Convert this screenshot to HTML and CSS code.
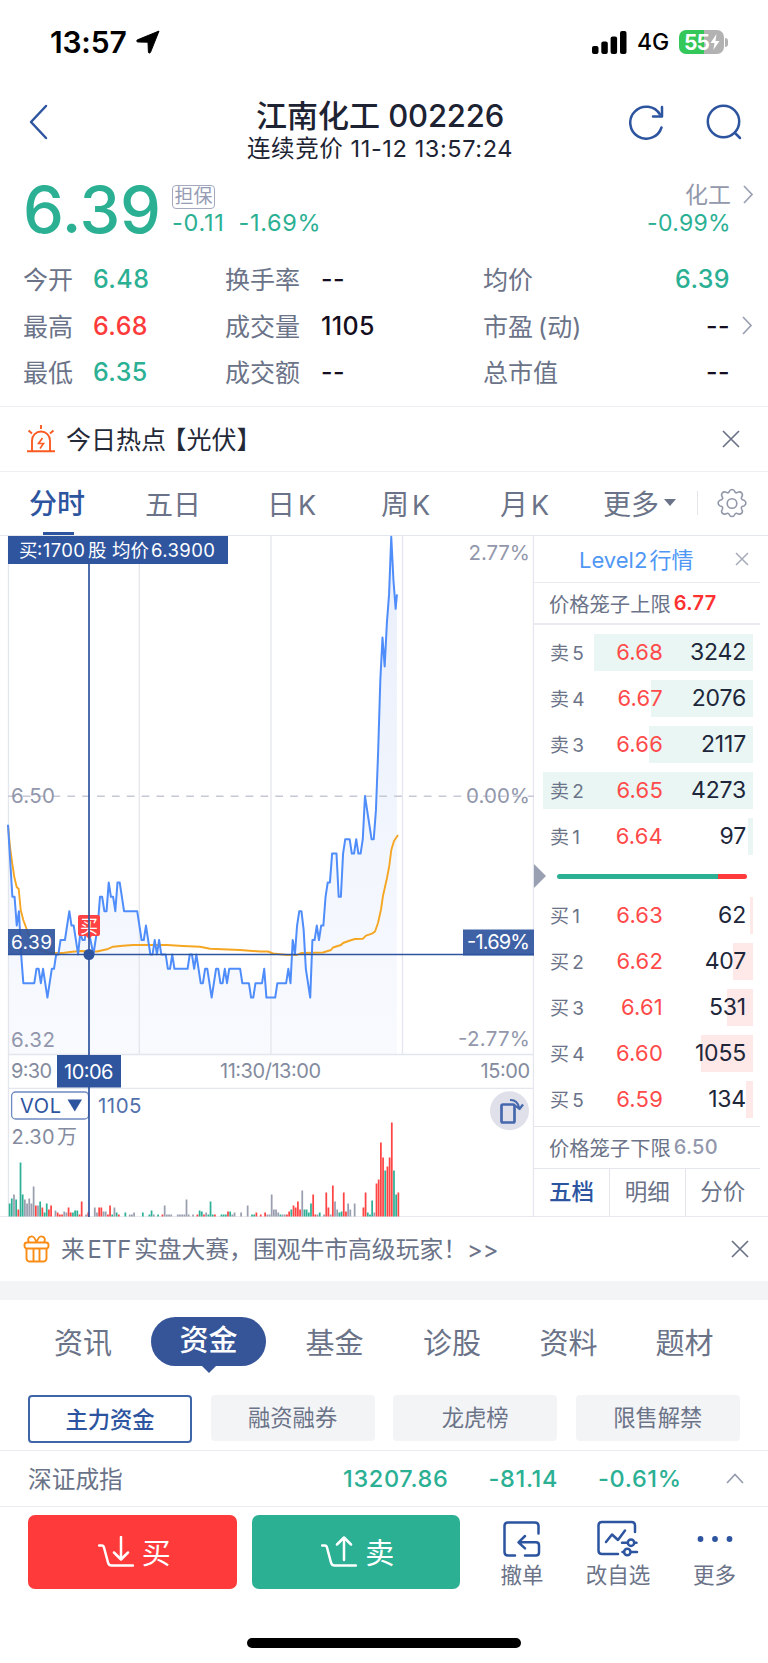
FILE: index.html
```html
<!DOCTYPE html>
<html lang="zh-CN">
<head>
<meta charset="utf-8">
<title>江南化工 002226</title>
<link rel="stylesheet" href="styles.css">
</head>
<body>
<div class="status">
  <div class="status-left"><span class="clock">13:57</span>
    <svg width="24" height="24" viewBox="0 0 24 24"><path d="M23 1 14.500 22.300c-.5 1.200-2 1-2.100-.4L12 12.200 2 12c-1.500 0-1.700-1.700-.4-2.200z" fill="#000" stroke="#000" stroke-linejoin="round"/></svg>
  </div>
  <div class="status-right">
    <svg width="35" height="23" viewBox="0 0 35 23"><rect x="0" y="15" width="6.500" height="8" rx="2"/><rect x="9.300" y="10.500" width="6.500" height="12.500" rx="2"/><rect x="18.600" y="5.500" width="6.500" height="17.500" rx="2"/><rect x="28" y="0" width="6.500" height="23" rx="2"/></svg>
    <span class="net">4G</span>
    <div class="battery"><span>55</span><svg width="12" height="18" viewBox="0 0 11 18"><path d="M7 1 1 10h4L3.800 17 10 8H6z" fill="#fff"/></svg></div><i class="nub"></i>
  </div>
</div>

<header class="header">
  <svg class="back" width="20" height="36" viewBox="0 0 20 36"><path d="M17 2 2 18l15 16"/></svg>
  <div class="title"><h1>江南化工 <span>002226</span></h1><p>连续竞价 11-12 13:57:24</p></div>
  <div class="head-icons">
    <svg width="35" height="36" viewBox="0 0 35 36"><path d="M32.500 23.500A16 16 0 1 1 31 10.500"/><path d="M33 3v9.500h-9"/></svg>
    <svg width="36" height="36" viewBox="0 0 36 36"><circle cx="17.500" cy="17.500" r="15.700"/><path d="m29 29 5 5"/></svg>
  </div>
</header>

<section class="quote">
  <div class="price">6.39</div>
  <div class="change"><span class="badge">担保</span><div class="delta"><span>-0.11</span><span>-1.69%</span></div></div>
  <div class="sector"><span class="sector-name">化工</span><span class="sector-pct">-0.99%</span></div>
  <svg class="chev" width="11" height="19" viewBox="0 0 11 19"><path d="m1 1 8 8.500L1 18"/></svg>
</section>

<section class="stats">
  <span>今开</span><b class="green">6.48</b><span>换手率</span><b>--</b><span>均价</span><b class="r green">6.39</b><i></i>
  <span>最高</span><b class="red">6.68</b><span>成交量</span><b>1105</b><span>市盈 (动)</span><b class="r">--</b><svg width="11" height="19" viewBox="0 0 11 19"><path d="m1 1 8 8.500L1 18"/></svg>
  <span>最低</span><b class="green">6.35</b><span>成交额</span><b>--</b><span>总市值</span><b class="r">--</b><i></i>
</section>

<section class="hot">
  <svg width="28" height="28" viewBox="0 0 28 28" fill="none" stroke="#fb5a22" stroke-width="1.900"><path d="M5 26V15.500a9 9 0 0 1 18 0V26M0 26.300h28"/><path d="M14 0v4M1.500 5.500l3.500 3M26.500 5.500l-3.500 3"/><path d="m15.500 13-4 5.500h5L13 23.500" stroke-width="1.600"/></svg>
  <span>今日热点<em>【光伏】</em></span>
  <svg class="close" width="18" height="18" viewBox="0 0 18 18"><path d="m1 1 16 16M17 1 1 17"/></svg>
</section>

<nav class="periods">
  <span class="on">分时</span><span>五日</span><span>日<em>K</em></span><span>周<em>K</em></span><span>月<em>K</em></span><span class="more">更多<i></i></span>
  <svg width="32" height="32" viewBox="0 0 32 32"><path d="M13.200 3.600Q13.800 1.500 16 1.500t2.800 2.100q.7 1.700 2.400 1l1.200-.6q2-.6 3.300.9 1.300 1.600.3 3.400l-.6 1.300q-.4 1.600 1.200 2.200l1.300.4q2 .8 2 2.800t-2 2.900l-1.300.4q-1.600.6-1.200 2.200l.6 1.300q1 1.900-.3 3.300-1.400 1.500-3.300.8l-1.200-.5q-1.700-.6-2.400 1-.6 2.100-2.800 2.100t-2.800-2.100q-.7-1.600-2.400-1l-1.200.5q-1.900.7-3.300-.8-1.300-1.400-.3-3.300l.6-1.300q.4-1.600-1.200-2.200l-1.300-.4Q2.100 17 2.100 15t2-2.800l1.300-.4Q7 11.200 6.600 9.600L6 8.300Q5 6.500 6.300 4.900 7.600 3.400 9.600 4l1.200.6q1.700.7 2.400-1z"/><circle cx="16" cy="15.500" r="4.800"/></svg>
</nav>

<main class="market">
  <svg class="chart" width="534" height="682" viewBox="0 535 534 682">
    <defs><linearGradient id="fade" x1="0" y1="0" x2="0" y2="1"><stop offset="0" stop-color="#e9effb"/><stop offset="1" stop-color="#f8fafe"/></linearGradient></defs>
    <g transform="translate(8 796) scale(2.190 14.400)">
      <polygon fill="url(#fade)" points="0,18 0,2 1,4.500 2,7 3,7 4,9 5,8 6,11 7,13 12,13 13,12 14,12 15,13 16,12 18,14 20,12 21,12 22,11 23,11 24,10 26,10 28,8 29,9 30,9 32,11 33,9.500 34,10 35,10 36,9 37,9.500 39,11 40,10 41,9 42,7 43,7 44,8 45,8 46,6 47,7 48,7 49,8 50,6 51,6 53,8 59,8 61,10 62,10 63,9 65,11 66,11 67,10 68,11 69,10 70,11 72,11 73,12 74,12 75,11 76,12 82,12 83,11 84,11 85,12 86,11 88,13 89,13 90,12 91,12 93,14 95,12 96,12 97,13 98,13 99,12 100,13 101,12 106,12 107,13 110,13 111,14 112,14 113,13 116,13 117,12 118,14 122,14 123,13 127,13 128,12 129,13 130,10 131,11 132,9 133,8 134,8 135,9.300 136,12 138,14 139,10 140,10 141,9 142,10 143,9 144,9 145,7 146,6 147,6 148,4 150,4 151,7 152,7 153,4 154,3 156,3 157,4 158,4 159,3 160,4 161,4 162,3 163,0 166,3 167,3 168,1 169,-3 170,-8 171,-11 172,-9 173,-12 174,-14 175,-18 176,-15 177,-13 177.600,-14 177.600,18"/>
    </g>
    <g stroke="#e4e6ed" stroke-width="1.300"><path d="M8.500 536v681M139.300 536v518M271 536v518M402.500 536v518M533.500 536v681M8 1054.500h526M8 1088.300h526"/></g>
    <path d="M8 796.200h526" stroke="#c5c8d5" stroke-width="1.600" stroke-dasharray="7.700 7.150"/>
    <g class="axis">
      <text x="11" y="803" textLength="44">6.50</text><text x="11" y="1046.500" textLength="44">6.32</text>
      <text x="468.500" y="560" textLength="61.500">2.77%</text><text x="466" y="803" textLength="64">0.00%</text><text x="458" y="1046" textLength="72">-2.77%</text>
    </g>
    <polyline fill="none" stroke="#f5a623" stroke-width="1.900" stroke-linejoin="round" points="8,825 10,847 12,862 14.300,877 16.700,887 18.700,889 20.700,910 23.300,920 27.700,932 33,943 40,950 50,953 63,953 70,952 80,951 97,951.500 107,949.300 113,946.700 123,945.700 133,945 167,945 183,946 200,946.700 210,948.700 240,950 260,951.500 268,951.500 273,953.500 287,955 297,955 301,953 323,952.500 331,950 333,947.500 341,945 343,943 350,940.500 355,939 363,938.700 366,935.600 372,933.600 375,931.500 378,923 381,909.500 383,895.700 387,878 389.300,865.700 391.300,850 394,841 398,835"/>
    <g transform="translate(8 796) scale(2.190 14.400)">
      <polyline vector-effect="non-scaling-stroke" fill="none" stroke="#4f8dfb" stroke-width="2" stroke-linejoin="round" points="0,2 1,4.500 2,7 3,7 4,9 5,8 6,11 7,13 12,13 13,12 14,12 15,13 16,12 18,14 20,12 21,12 22,11 23,11 24,10 26,10 28,8 29,9 30,9 32,11 33,9.500 34,10 35,10 36,9 37,9.500 39,11 40,10 41,9 42,7 43,7 44,8 45,8 46,6 47,7 48,7 49,8 50,6 51,6 53,8 59,8 61,10 62,10 63,9 65,11 66,11 67,10 68,11 69,10 70,11 72,11 73,12 74,12 75,11 76,12 82,12 83,11 84,11 85,12 86,11 88,13 89,13 90,12 91,12 93,14 95,12 96,12 97,13 98,13 99,12 100,13 101,12 106,12 107,13 110,13 111,14 112,14 113,13 116,13 117,12 118,14 122,14 123,13 127,13 128,12 129,13 130,10 131,11 132,9 133,8 134,8 135,9.300 136,12 138,14 139,10 140,10 141,9 142,10 143,9 144,9 145,7 146,6 147,6 148,4 150,4 151,7 152,7 153,4 154,3 156,3 157,4 158,4 159,3 160,4 161,4 162,3 163,0 166,3 167,3 168,1 169,-3 170,-8 171,-11 172,-9 173,-12 174,-14 175,-18 176,-15 177,-13 177.600,-14"/>
    </g>
    <path d="M80 915h18q2 0 2 2v17q0 2-2 2h-6l-3 3-3-3h-6q-2 0-2-2v-17q0-2 2-2z" fill="#ff4243"/>
    <text x="80" y="932.500" font-size="18" fill="#fff">买</text>
    <g class="time"><text x="11" y="1077.500" textLength="41">9:30</text><text x="220" y="1077.500" textLength="101">11:30/13:00</text><text x="480.500" y="1077.500" textLength="49.500">15:00</text></g>
    <g transform="translate(9.600 1216.500) scale(2.184 1)" stroke-width=".8" fill="none">
      <path stroke="#9a9fb0" d="M2 0v-22M7 0v-17M8 0v-13M9 0v-18M10 0v-13M11 0v-30M13 0v-11M21 0v-6M25 0v-5M26 0v-4M35 0v-2M39 0v-9M40 0v-4M43 0v-5M44 0v-5M48 0v-9M55 0v-2M56 0v-2M57 0v-4M66 0v-2M71 0v-11M72 0v-2M73 0v-2M74 0v-2M77 0v-2M78 0v-2M79 0v-2M80 0v-2M81 0v-17M82 0v-2M84 0v-2M90 0v-4M102 0v-2M103 0v-4M106 0v-4M109 0v-11M118 0v-2M119 0v-2M120 0v-22M121 0v-7M122 0v-7M123 0v-4M125 0v-2M126 0v-2M134 0v-26M141 0v-2M144 0v-2M147 0v-2M149 0v-15M150 0v-7M155 0v-13M156 0v-7M158 0v-13M167 0v-4"/>
      <path stroke="#2fb096" d="M0 0v-13M1 0v-18M3 0v-17M5 0v-54M6 0v-22M14 0v-15M16 0v-4M17 0v-13M29 0v-4M30 0v-6M31 0v-6M47 0v-2M49 0v-4M53 0v-4M61 0v-4M64 0v-2M65 0v-6M68 0v-2M87 0v-6M88 0v-5M91 0v-2M92 0v-15M93 0v-2M97 0v-2M98 0v-2M99 0v-2M101 0v-5M111 0v-2M112 0v-2M124 0v-2M129 0v-7M135 0v-7M136 0v-7M137 0v-4M138 0v-13M142 0v-4M151 0v-4M152 0v-5M164 0v-4M165 0v-2M166 0v-16M172 0v-46M176 0v-46M177 0v-22"/>
      <path stroke="#ff4444" d="M4 0v-7M12 0v-11M15 0v-9M18 0v-7M19 0v-11M22 0v-4M23 0v-2M24 0v-2M27 0v-9M28 0v-4M32 0v-2M33 0v-15M36 0v-4M41 0v-9M42 0v-9M45 0v-2M46 0v-11M50 0v-2M70 0v-2M86 0v-2M89 0v-2M94 0v-2M100 0v-5M113 0v-4M115 0v-2M117 0v-4M127 0v-2M128 0v-5M130 0v-11M131 0v-9M132 0v-15M133 0v-7M139 0v-22M140 0v-2M145 0v-24M146 0v-9M148 0v-31M153 0v-24M154 0v-5M162 0v-9M163 0v-24M168 0v-33M169 0v-37M170 0v-74M171 0v-59M173 0v-50M174 0v-59M175 0v-94M178 0v-24"/>
    </g>
    <rect x="11.600" y="1092" width="77" height="27" rx="4" fill="#fff" stroke="#6d8bc0" stroke-width="1.300"/>
    <text x="20" y="1112.500" textLength="41" font-size="20" fill="#2d549f">VOL</text><path d="M67.500 1099.500h14.500l-7.200 12z" fill="#2d549f"/>
    <text x="98" y="1112.500" textLength="43.500" font-size="20.500" fill="#5270ac">1105</text>
    <g font-size="20" fill="#848b9e"><text x="11.500" y="1143.500" textLength="43">2.30</text><text x="57" y="1143.500">万</text></g>
    <circle cx="509.500" cy="1110.800" r="19.500" fill="#dfe0ea"/>
    <g fill="none" stroke="#4668ad" stroke-width="2.700" stroke-linejoin="round"><rect x="501.500" y="1104.500" width="13" height="18" rx="1.500"/><path d="M510 1100c5-.3 8 2.500 9.200 8M515 1105.500l4.500 3.500 3.500-4.500" stroke-width="2.200"/></g>
    <g fill="#2f559f"><rect x="8" y="929" width="47" height="26" opacity=".92"/><rect x="463" y="929.500" width="71" height="26" opacity=".92"/><rect x="57" y="1055" width="64" height="32.500"/><rect x="8" y="536" width="220" height="28"/><circle cx="89" cy="954.500" r="5.500"/></g>
    <path d="M89 564v491M89 1087v130M8 954.500h526" stroke="#2f559f" stroke-width="1.700"/>
    <g fill="#fff"><text x="11" y="949" font-size="19" textLength="41">6.39</text><text x="467" y="949" font-size="20" textLength="63">-1.69%</text><text x="64" y="1079" font-size="20" textLength="49.500">10:06</text>
      <g font-size="18.500"><text x="19" y="557">买</text><text x="37" y="557" textLength="48">:1700</text><text x="88" y="557">股</text><text x="112" y="557">均价</text><text x="151" y="557" textLength="64">6.3900</text></g></g>
  </svg>
  <aside class="book">
    <div class="level"><span>Level2 行情</span><svg width="14" height="14" viewBox="0 0 14 14"><path d="m1 1 12 12M13 1 1 13"/></svg></div>
    <div class="cage">价格笼子上限<b>6.77</b></div>
    <div class="rows asks">
      <div class="row"><i style="width:159px"></i><span>卖 5</span><em>6.68</em><b>3242</b></div>
      <div class="row"><i style="width:102px"></i><span>卖 4</span><em>6.67</em><b>2076</b></div>
      <div class="row"><i style="width:104px"></i><span>卖 3</span><em>6.66</em><b>2117</b></div>
      <div class="row"><i style="width:210px"></i><span>卖 2</span><em>6.65</em><b>4273</b></div>
      <div class="row"><i style="width:5px"></i><span>卖 1</span><em>6.64</em><b>97</b></div>
    </div>
    <div class="ratio"><svg width="12" height="24" viewBox="0 0 12 24"><path d="m0 0 12 12L0 24z" fill="#99a0b2"/></svg><div class="ratio-bar"></div></div>
    <div class="rows bids">
      <div class="row"><i style="width:3px"></i><span>买 1</span><em>6.63</em><b>62</b></div>
      <div class="row"><i style="width:20px"></i><span>买 2</span><em>6.62</em><b>407</b></div>
      <div class="row"><i style="width:26px"></i><span>买 3</span><em>6.61</em><b>531</b></div>
      <div class="row"><i style="width:52px"></i><span>买 4</span><em>6.60</em><b>1055</b></div>
      <div class="row"><i style="width:7px"></i><span>买 5</span><em>6.59</em><b>134</b></div>
    </div>
    <div class="cage low">价格笼子下限<b>6.50</b></div>
    <div class="book-tabs"><span class="on">五档</span><span>明细</span><span>分价</span></div>
  </aside>
</main>

<section class="promo">
  <svg width="27" height="28" viewBox="0 0 27 28" fill="none" stroke="#fa8c16" stroke-width="1.900" stroke-linejoin="round"><rect x="1.500" y="7.500" width="24" height="6" rx="2.500"/><path d="M3.500 13.500V23q0 3.500 3.500 3.500h13q3.500 0 3.500-3.500v-9.500M10.500 14v12M16.500 14v12M13.500 7.500C12 3 10 1 8 1.500c-3 .5-3.500 3.500-2 6M13.500 7.500C15 3 17 1 19 1.500c3 .5 3.500 3.500 2 6"/></svg>
  <span>来 ETF 实盘大赛，围观牛市高级玩家！&gt;&gt;</span>
  <svg class="close" width="18" height="18" viewBox="0 0 18 18"><path d="m1 1 16 16M17 1 1 17"/></svg>
</section>
<div class="band"></div>
<nav class="topics"><span>资讯</span><span class="on">资金</span><span>基金</span><span>诊股</span><span>资料</span><span>题材</span></nav>
<nav class="subs"><span class="on">主力资金</span><span>融资融券</span><span>龙虎榜</span><span>限售解禁</span></nav>
<section class="index"><span>深证成指</span><b>13207.86</b><b>-81.14</b><b>-0.61%</b><svg width="18" height="11" viewBox="0 0 18 11"><path d="m1 10 8-8.500 8 8.500"/></svg></section>

<footer class="actions">
  <button class="buy"><svg width="36" height="32" viewBox="0 0 36 32"><path d="M1 9.500h3q1.500 0 2 2l4 15q.7 3 3.500 3H35"/><path d="M23 1v22M16 16.500l7 7 7-7"/></svg>买</button>
  <button class="sell"><svg width="36" height="32" viewBox="0 0 36 32"><path d="M1 9.500h3q1.500 0 2 2l4 15q.7 3 3.500 3H35"/><path d="M23 24V1.500M16 8.500l7-7 7 7"/></svg>卖</button>
  <div class="act a1"><svg width="40" height="38" viewBox="0 0 40 38"><path d="M13 35.500H6q-3.500 0-3.500-3.500V6q0-3.500 3.500-3.500h27q3.500 0 3.500 3.500v7.500"/><path d="M23 16l-6.500 6.300 6.500 6M17 22.300H34q3 0 3 3v7.200q0 3-3 3H23"/></svg>撤单</div>
  <div class="act a2"><svg width="42" height="38" viewBox="0 0 42 38"><path d="M21 34H5q-3.500 0-3.500-3.500V5.500Q1.500 2 5 2h29.500Q38 2 38 5.500V12"/><path d="m9 22 6-7.500 6 5.500 7-9.500"/><path d="M25 22.700h5.500M37.500 22.700h2M25.500 32h1.500M34 32h6"/><circle cx="34" cy="22.700" r="3.200"/><circle cx="30.300" cy="32" r="3.200"/></svg>改自选</div>
  <div class="act a3"><svg width="42" height="38" viewBox="0 0 42 38"><g fill="#2d549f" stroke="none"><circle cx="6.500" cy="19" r="2.900"/><circle cx="21" cy="19" r="2.900"/><circle cx="35.500" cy="19" r="2.900"/></g></svg>更多</div>
</footer>
<div class="home"></div>
</body>
</html>
```
FILE: styles.css
```css
* { box-sizing: border-box; }
body { margin: 0; width: 768px; height: 1663px; background: #fff; color: #6b7388; font-family: "Inter", "Noto Sans CJK SC", sans-serif; overflow: hidden; }
svg { display: block; flex: none; }
b, em, i { font-style: normal; font-weight: 400; }
.green { color: #2bb094; }
.red { color: #ff3a3a; }

.status { height: 84px; display: flex; justify-content: space-between; padding: 30px 40px 0 50px; }
.status-left, .status-right { display: flex; height: 24px; align-items: center; color: #000; }
.clock { font-size: 30px; font-weight: 600; letter-spacing: -.2px; width: 86px; }
.net { font-size: 23px; font-weight: 500; margin: 0 9px 0 10px; width: 33px; }
.battery { width: 45px; height: 24px; border-radius: 7px; background: linear-gradient(90deg, #34c759 56%, #b2b2b2 56%); color: #fff; font-size: 21px; font-weight: 700; display: flex; align-items: center; padding-left: 5px; letter-spacing: -1px; }
.nub { width: 3px; height: 9px; margin-left: 1px; border-radius: 0 4px 4px 0; background: #b2b2b2; }

.header { height: 92px; display: grid; grid-template-columns: 220px 320px 1fr; }
.header svg { fill: none; stroke: #2d549f; stroke-width: 2.500; stroke-linecap: round; stroke-linejoin: round; }
.back { margin: 20px 0 0 29px; }
.title { text-align: center; color: #1d2333; white-space: nowrap; }
h1 { margin: 13px 0 0; font-size: 31px; line-height: 38px; font-weight: 500; }
h1 span { letter-spacing: -.2px; }
.title p { margin: 0; font-size: 23.500px; line-height: 28px; letter-spacing: .6px; }
.head-icons { display: flex; padding: 20px 0 0 89px; gap: 42px; }

.quote { height: 80px; display: flex; }
.price { width: 149px; margin-left: 23px; font-size: 65px; line-height: 68px; font-weight: 500; letter-spacing: -.2px; color: #2bb094; }
.change { width: 300px; padding-top: 9px; }
.badge { display: block; width: 43px; height: 24px; border: 1px solid #a5a9c0; border-radius: 4px; color: #979cb5; font-size: 19px; line-height: 21px; text-align: center; }
.delta { display: flex; gap: 14px; font-size: 23.500px; line-height: 28px; color: #2bb094; letter-spacing: .7px; white-space: nowrap; }
.sector { width: 259px; padding-top: 5px; text-align: right; font-size: 23px; line-height: 28px; }
.sector span { display: block; color: #9398ab; }
.sector .sector-pct { line-height: 28px; color: #2bb094; letter-spacing: .3px; }
.chev { margin: 9px 0 0 12px; }
.chev, .stats svg { fill: none; stroke: #9aa0b2; stroke-width: 1.700; }

.stats { height: 151px; padding-left: 23px; display: grid; grid-template-columns: 70px 132px 96px 162px 140px 107px 1fr; grid-auto-rows: 46.400px; align-items: center; font-size: 25px; white-space: nowrap; border-bottom: 1px solid #eeeff2; }
.stats span { padding-bottom: 2px; word-spacing: -2px; }
.stats b { font-weight: 500; color: #150d20; letter-spacing: .4px; }
.stats b.green { color: #2bb094; }
.stats b.red { color: #ff3a3a; }
.stats .r { text-align: right; }
.stats svg { margin-left: 12px; }

.hot { height: 65px; display: flex; align-items: center; padding: 0 28px 0 27px; border-bottom: 1px solid #eeeff2; color: #242938; font-size: 25px; white-space: nowrap; font-feature-settings: "halt"; }
.hot span { margin: -2px 0 0 11px; flex: 1; }
.hot em { margin-left: 8px; }
.close { fill: none; stroke: #6b7388; stroke-width: 1.700; }

.periods { height: 64px; display: grid; grid-template-columns: 88px 122px 114px 119px 131px 95px 1fr; align-items: center; padding-left: 29px; font-size: 28px; color: #6b7388; border-bottom: 1px solid #e4e6ed; white-space: nowrap; }
.periods span { padding-left: 28px; margin-bottom: 2px; }
.periods em { margin-left: 3px; font-size: 27px; }
.periods .on { width: 58px; padding: 0; margin: 0; color: #2d549f; font-weight: 500; height: 63px; line-height: 65px; background: linear-gradient(#2d549f, #2d549f) 14px 100% / 31px 3px no-repeat; }
.periods .more { display: flex; align-items: center; border-right: 1px solid #e4e6ed; height: 24px; padding: 0; }
.periods .more i { margin-left: 5px; border: 6px solid transparent; border-top: 7px solid #6b7388; border-bottom: 0; }
.periods svg { margin-left: 18px; fill: none; stroke: #9298aa; stroke-width: 1.600; }

.market { height: 681px; display: flex; border-bottom: 1px solid #e8e9ee; }
.chart { margin-top: -1px; }
.axis { font-size: 20.500px; fill: #9297ac; }
.time { font-size: 20px; fill: #848b9e; }

.book { width: 226px; white-space: nowrap; }
.level { height: 47px; padding-left: 45px; display: flex; align-items: center; border-bottom: 1px solid #e9ebf0; color: #4f97f5; font-size: 22px; }
.level span { width: 156px; word-spacing: -4px; padding-bottom: 2px; }
.level svg { stroke: #a5abb9; stroke-width: 1.500; }
.cage { height: 42px; padding: 0 0 1px 15px; display: flex; align-items: center; font-size: 20.300px; border-bottom: 2px solid #e9ebf0; }
.cage b { margin-left: 3px; color: #ff3030; font-weight: 600; font-size: 20px; letter-spacing: .3px; }
.rows { display: flex; flex-direction: column; gap: 9px; }
.asks { padding-top: 9px; }
.row { position: relative; height: 37px; width: 219px; display: grid; grid-template-columns: 44px 69px 83px; padding: 0 0 2px 16px; align-items: center; }
.row i { position: absolute; z-index: -1; right: 0; top: 0; height: 37px; background: #e9f6f3; }
.bids i { background: #ffe8e8; }
.row span { font-size: 19px; word-spacing: -2px; }
.row em { color: #ff4a4a; font-size: 22px; text-align: right; letter-spacing: .2px; }
.row b { color: #20263a; font-size: 23px; text-align: right; letter-spacing: -.2px; }
.ratio { height: 42px; display: flex; align-items: center; }
.ratio-bar { width: 190px; height: 5px; margin-left: 11px; border-radius: 3px; background: linear-gradient(90deg, #2bb094 85%, #ff3a3a 85%); }
.low { margin-top: 8px; border-top: 1px solid #e4e6ed; border-bottom: 1px solid #e4e6ed; height: 43px; }
.low b { color: #9297ac; font-weight: 500; }
.book-tabs { height: 47px; display: grid; grid-template-columns: 75px 75.500px 75.500px; font-size: 22.500px; line-height: 46px; text-align: center; }
.book-tabs span + span { border-left: 1px solid #e4e6ed; }
.book-tabs .on { color: #2d549f; font-weight: 500; }

.promo { height: 64px; padding: 0 19px 0 23px; display: flex; align-items: center; font-size: 23.800px; white-space: nowrap; }
.promo span { margin: -3px 0 0 11px; flex: 1; word-spacing: -4px; }
.band { height: 19px; background: #f3f4f6; }
.topics { height: 84px; padding: 0 0 2px 24px; display: grid; grid-template-columns: 118px 133.500px 118px 117px 116px 116px; align-items: center; text-align: center; font-size: 29px; }
.topics .on { position: relative; width: 115px; height: 49px; margin-left: 9px; line-height: 48px; border-radius: 25px; background: #365598; color: #fff; font-weight: 500; }
.topics .on::after { content: ""; position: absolute; left: 50px; top: 48px; border: 8px solid transparent; border-top-color: #365598; border-bottom: 0; }
.subs { height: 67px; padding: 11px 28px 8px; display: grid; grid-template-columns: repeat(4, 164px); gap: 18.600px; text-align: center; font-size: 22.300px; line-height: 46px; border-bottom: 1px solid #ebecf0; }
.subs span { height: 46px; border-radius: 4px; background: #f3f4f6; }
.subs .on { height: 48px; border: 2px solid #3f65a9; background: #fff; color: #2d549f; font-weight: 500; }
.index { height: 56px; padding: 0 24px 0 28px; display: flex; align-items: center; border-bottom: 1px solid #ebecf0; font-size: 23.700px; }
.index span { width: 315px; padding-bottom: 2px; }
.index b { color: #2bb094; font-weight: 500; font-size: 23.500px; letter-spacing: .65px; }
.index b:nth-of-type(2), .index b:nth-of-type(3) { margin-left: 40px; }
.index svg { margin-left: auto; fill: none; stroke: #969cae; stroke-width: 1.700; }
.actions { height: 131px; padding: 8px 0 0 28px; display: flex; }
.actions button { width: 208.500px; height: 74px; margin-right: 15px; border: 0; border-radius: 7px; padding: 0 0 2px 4px; display: flex; align-items: center; justify-content: center; gap: 8px; color: #fff; font: 400 29px "Noto Sans CJK SC", sans-serif; }
.actions button svg { margin-top: 2px; fill: none; stroke: #fff; stroke-width: 2.500; stroke-linecap: round; stroke-linejoin: round; }
.actions .buy { background: #ff3a3a; }
.actions .sell { background: #2bb094; }
.act { display: flex; flex-direction: column; align-items: center; padding-top: 5px; font-size: 21.500px; line-height: 34px; white-space: nowrap; }
.act svg { fill: none; stroke: #2d549f; stroke-width: 2.500; stroke-linecap: round; stroke-linejoin: round; }
.a1 { width: 90px; margin-left: 2px; }
.a2 { width: 102px; }
.a3 { width: 91px; }
.home { width: 274px; height: 10px; margin-left: 247px; border-radius: 5px; background: #000; }
```
